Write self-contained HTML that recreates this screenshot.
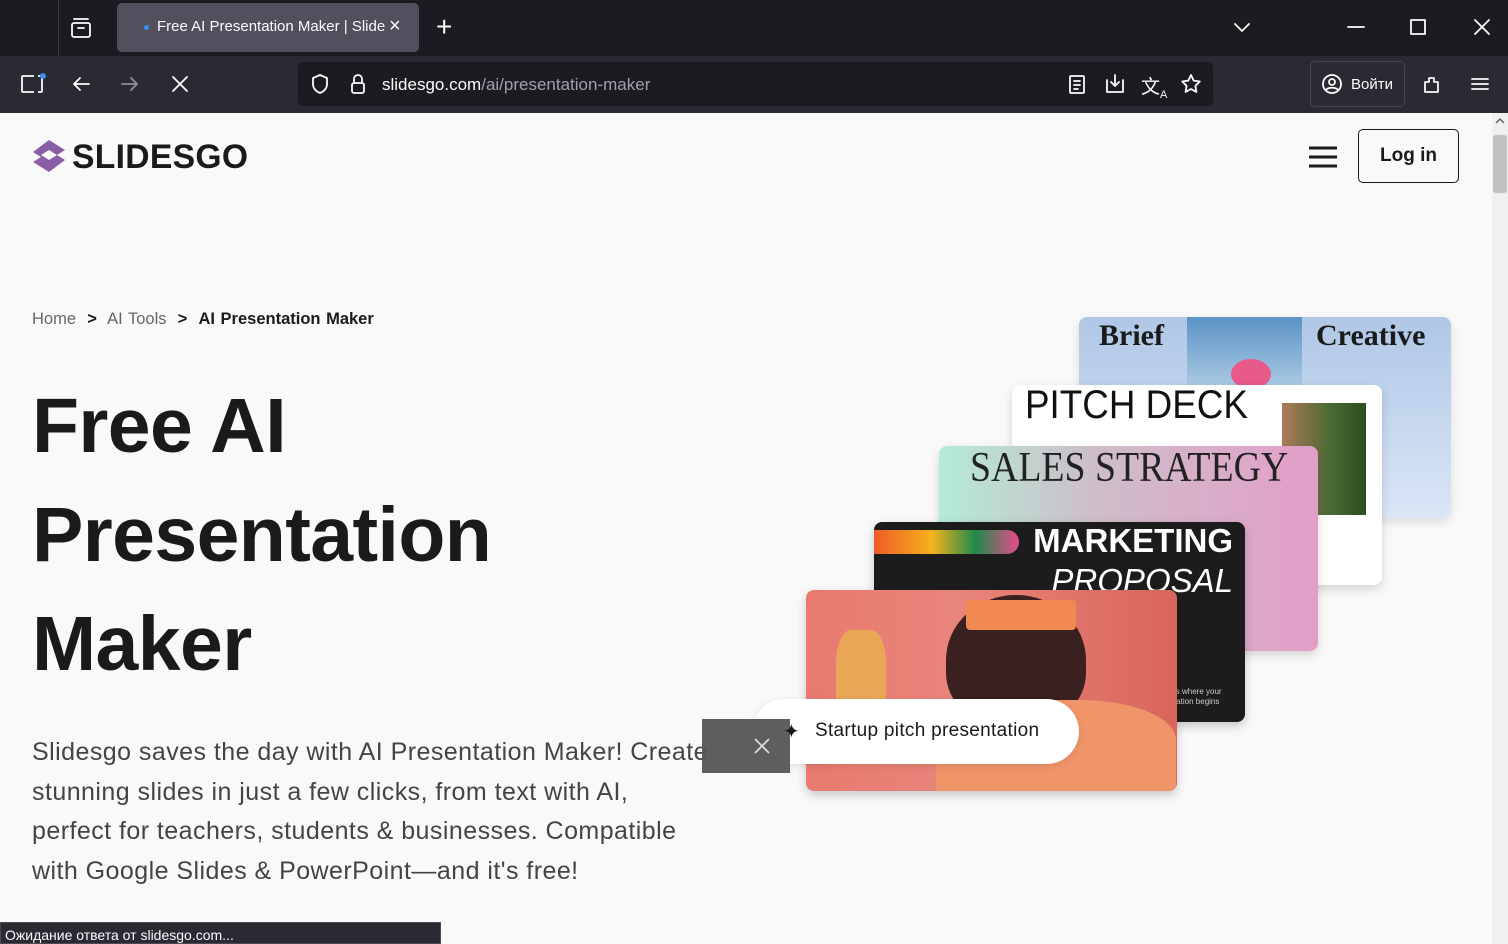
<!DOCTYPE html>
<html><head><meta charset="utf-8"><style>
*{margin:0;padding:0;box-sizing:border-box}
body{width:1508px;height:944px;overflow:hidden;background:#f9f9f9;font-family:"Liberation Sans",sans-serif;position:relative}
.a{position:absolute}
.ic{stroke:#fbfbfe;fill:none;stroke-width:1.8;stroke-linecap:round;stroke-linejoin:round}
</style></head><body>
<div class="a" style="left:0;top:0;width:1508px;height:56px;background:#1c1b22"></div>
<div class="a" style="left:58px;top:0;width:1px;height:56px;background:#3a3944"></div>
<svg class="a ic" style="left:69px;top:16px" width="24" height="24"><rect x="3" y="7" width="18" height="14" rx="2"/><path d="M5 3h14M9 12h6"/></svg>
<div class="a" style="left:117px;top:3px;width:302px;height:49px;background:#52505c;border-radius:5px"></div>
<div class="a" style="left:144px;top:25px;width:5px;height:5px;border-radius:50%;background:#3a8ff0"></div>
<div class="a" style="left:157px;top:18px;width:228px;font-size:15px;color:#fbfbfe;white-space:nowrap;overflow:hidden">Free AI Presentation Maker | Slidesgo</div>
<div class="a" style="left:389px;top:15px;font-size:20px;color:#fbfbfe">×</div>
<div class="a" style="left:436px;top:11px;font-size:28px;color:#fbfbfe;font-weight:300">+</div>
<svg class="a ic" style="left:1231px;top:17px" width="22" height="22"><path d="M4 7l7 7 7-7"/></svg>
<svg class="a ic" style="left:1344px;top:15px" width="24" height="24"><path d="M4 12h16"/></svg>
<svg class="a ic" style="left:1406px;top:15px" width="24" height="24"><rect x="5" y="5" width="14" height="14"/></svg>
<svg class="a ic" style="left:1470px;top:15px" width="24" height="24"><path d="M5 5l14 14M19 5L5 19"/></svg>
<div class="a" style="left:0;top:56px;width:1508px;height:57px;background:#2b2a33"></div>
<svg class="a ic" style="left:20px;top:72px" width="28" height="24"><rect x="2" y="4" width="20" height="16" rx="1"/><path d="M16 4v16" stroke-width="4" stroke="#2b2a33"/><circle cx="23" cy="4" r="3" fill="#3a8ff0" stroke="none"/></svg>
<svg class="a ic" style="left:69px;top:72px" width="24" height="24"><path d="M20 12H5M11 6l-6 6 6 6"/></svg>
<svg class="a" style="left:118px;top:72px;stroke:#8f8f9d;fill:none;stroke-width:1.8;stroke-linecap:round;stroke-linejoin:round" width="24" height="24"><path d="M4 12h15M13 6l6 6-6 6"/></svg>
<svg class="a ic" style="left:168px;top:72px" width="24" height="24"><path d="M5 5l14 14M19 5L5 19"/></svg>
<div class="a" style="left:298px;top:62px;width:915px;height:44px;background:#1c1b22;border-radius:5px"></div>
<svg class="a ic" style="left:308px;top:72px" width="24" height="24"><path d="M12 3l7 3v6c0 5-4 8-7 9-3-1-7-4-7-9V6z"/></svg>
<svg class="a ic" style="left:346px;top:72px" width="24" height="24"><rect x="6" y="11" width="12" height="10" rx="2"/><path d="M8 11V7a4 4 0 018 0v4"/></svg>
<div class="a" style="left:382px;top:75px;font-size:17px;color:#fbfbfe">slidesgo.com<span style="color:#a0a0ab">/ai/presentation-maker</span></div>
<svg class="a ic" style="left:1065px;top:72px" width="24" height="24"><rect x="5" y="4" width="14" height="17" rx="1"/><path d="M9 9h6M9 13h6M9 17h4"/></svg>
<svg class="a ic" style="left:1103px;top:72px" width="24" height="24"><path d="M4 8v12h16V8M12 3v11M8 10l4 4 4-4"/></svg>
<div class="a" style="left:1141px;top:72px;font-size:19px;color:#fbfbfe">文<sub style="font-size:11px">A</sub></div>
<svg class="a ic" style="left:1179px;top:72px" width="24" height="24"><path d="M12 3l2.7 5.6 6.1.9-4.4 4.3 1 6.1L12 17l-5.4 2.9 1-6.1L3.2 9.5l6.1-.9z"/></svg>
<div class="a" style="left:1310px;top:61px;width:95px;height:46px;border:1px solid #45444f;border-radius:5px"></div>
<svg class="a ic" style="left:1320px;top:72px" width="24" height="24"><circle cx="12" cy="12" r="9"/><circle cx="12" cy="10" r="3"/><path d="M6 18c2-3 10-3 12 0"/></svg>
<div class="a" style="left:1351px;top:76px;font-size:15px;color:#fbfbfe">Войти</div>
<svg class="a ic" style="left:1420px;top:72px" width="24" height="24"><path d="M5 10h4V6h5v4h4v10H5z"/></svg>
<svg class="a ic" style="left:1468px;top:72px" width="24" height="24"><path d="M4 7h16M4 12h16M4 17h16"/></svg>
<div class="a" style="left:1492px;top:113px;width:16px;height:831px;background:#f0f0f0"></div>
<div class="a" style="left:1493px;top:135px;width:14px;height:58px;background:#c1c1c1;border-radius:3px"></div>
<svg class="a" style="left:1494px;top:116px" width="12" height="10"><path d="M2 7l4-4 4 4" stroke="#666" fill="none" stroke-width="1.5"/></svg>

<svg class="a" style="left:31px;top:139px" width="36" height="35" viewBox="0 0 36 35"><path d="M18 1L34 11 26 16 18 11 10 16 18 21 26 16 34 21 18 33 2 23 10 18 18 23 10 18 2 13z" fill="#8a5ea5"/></svg>
<div class="a" style="left:72px;top:138px;font-size:34px;font-weight:bold;color:#1a1a1a;transform:scaleX(.99);transform-origin:left;letter-spacing:0.3px">SLIDESGO</div>
<svg class="a" style="left:1308px;top:144px" width="30" height="26"><path d="M1 4h28M1 13h28M1 22h28" stroke="#1a1a1a" stroke-width="3"/></svg>
<div class="a" style="left:1358px;top:129px;width:101px;height:54px;border:1.5px solid #1a1a1a;border-radius:5px;font-size:19px;font-weight:bold;color:#1a1a1a;text-align:center;line-height:51px">Log in</div>

<div class="a" style="left:32px;top:310px;font-size:16.5px;color:#666;word-spacing:1px">Home &nbsp;<b style="color:#1a1a1a">&gt;</b>&nbsp; AI Tools &nbsp;<b style="color:#1a1a1a">&gt;</b>&nbsp; <b style="color:#1a1a1a;font-weight:600">AI Presentation Maker</b></div>
<div class="a" style="left:32px;top:372px;font-size:77px;font-weight:bold;color:#1a1a1a;line-height:109px;letter-spacing:-0.6px">Free AI<br>Presentation<br>Maker</div>
<div class="a" style="left:32px;top:733px;width:680px;font-size:25px;color:#444;line-height:39.7px;letter-spacing:0.45px">Slidesgo saves the day with AI Presentation Maker! Create stunning slides in just a few clicks, from text with AI, perfect for teachers, students &amp; businesses. Compatible with Google Slides &amp; PowerPoint—and it's free!</div>

<div class="a" style="left:1079px;top:317px;width:372px;height:201px;border-radius:8px;background:linear-gradient(#afc7e6,#dbe6f6);box-shadow:0 4px 10px rgba(0,0,0,.12);overflow:hidden">
<div class="a" style="left:108px;top:0;width:115px;height:68px;background:linear-gradient(#5b93c6,#a9c8e3)"></div>
<div class="a" style="left:152px;top:42px;width:40px;height:30px;border-radius:50%;background:#e85a8a"></div>
<div class="a" style="left:20px;top:2px;font-family:'Liberation Serif',serif;font-weight:bold;font-size:30px;color:#1a1a1a">Brief</div>
<div class="a" style="left:237px;top:2px;font-family:'Liberation Serif',serif;font-weight:bold;font-size:30px;color:#1a1a1a">Creative</div></div>
<div class="a" style="left:1012px;top:385px;width:370px;height:200px;border-radius:8px;background:#fff;box-shadow:0 4px 10px rgba(0,0,0,.15);overflow:hidden">
<div class="a" style="left:270px;top:18px;width:84px;height:112px;background:linear-gradient(90deg,#b07a5a,#4d6b35 55%,#2e4a20)"></div>
<div class="a" style="left:13px;top:-2px;font-size:40px;color:#111;transform:scaleX(.92);transform-origin:left">PITCH DECK</div></div>
<div class="a" style="left:939px;top:446px;width:379px;height:205px;border-radius:8px;background:linear-gradient(90deg,#b4ebd6,#cdbfc9 40%,#e39ec8);box-shadow:0 4px 10px rgba(0,0,0,.15)">
<div class="a" style="left:31px;top:-2px;font-family:'Liberation Serif',serif;font-size:42px;color:#222;transform:scaleX(.9);transform-origin:left;white-space:nowrap">SALES STRATEGY</div></div>
<div class="a" style="left:874px;top:522px;width:371px;height:200px;border-radius:8px;background:#1c1c1c;box-shadow:0 4px 10px rgba(0,0,0,.2);overflow:hidden">
<div class="a" style="left:0;top:8px;width:145px;height:24px;border-radius:0 12px 12px 0;background:linear-gradient(90deg,#f05a28,#f5b21e 40%,#1f8a4a 70%,#e84a8a)"></div>
<div class="a" style="right:12px;top:0;font-size:33px;font-weight:bold;color:#fff">MARKETING</div>
<div class="a" style="right:12px;top:40px;font-size:33px;font-style:italic;color:#fff">PROPOSAL</div>
<div class="a" style="left:300px;top:165px;font-size:8px;color:#ccc;line-height:10px">is where your<br>tation begins</div></div>
<div class="a" style="left:806px;top:590px;width:371px;height:201px;border-radius:8px;background:linear-gradient(90deg,#e87a70,#e8857a 40%,#d9655c);box-shadow:0 4px 10px rgba(0,0,0,.2);overflow:hidden">
<div class="a" style="left:140px;top:5px;width:140px;height:130px;border-radius:50% 50% 40% 40%;background:#3a2020"></div>
<div class="a" style="left:160px;top:10px;width:110px;height:30px;background:#f08a50;border-radius:4px"></div>
<div class="a" style="left:130px;top:110px;width:240px;height:100px;border-radius:40% 40% 0 0;background:#f0956a"></div>
<div class="a" style="left:30px;top:40px;width:50px;height:110px;border-radius:30%;background:#e8b050;opacity:.8"></div></div>
<div class="a" style="left:752px;top:699px;width:327px;height:65px;border-radius:33px;background:#fff;box-shadow:0 2px 8px rgba(0,0,0,.1)"></div>
<div class="a" style="left:815px;top:720px;font-size:19px;color:#1a1a1a;letter-spacing:0.3px">Startup pitch presentation</div>
<div class="a" style="left:702px;top:719px;width:88px;height:54px;background:#555;opacity:.95"></div>
<svg class="a" style="left:752px;top:736px" width="20" height="20"><path d="M3 3l14 14M17 3L3 17" stroke="#ddd" stroke-width="1.8"/></svg>
<div class="a" style="left:783px;top:719px;font-size:20px;color:#1a1a1a">✦</div>
<div class="a" style="left:0;top:922px;width:441px;height:22px;background:#2b2a33;border:1px solid #4a4a55;font-size:14px;color:#fbfbfe;padding:5px 0 0 4px;line-height:14px">Ожидание ответа от slidesgo.com...</div>
</body></html>
